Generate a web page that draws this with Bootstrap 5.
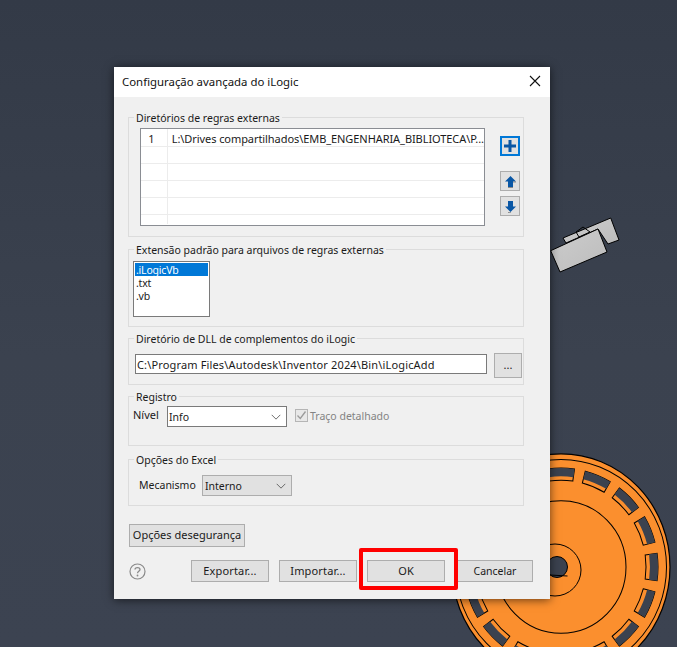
<!DOCTYPE html>
<html lang="pt">
<head>
<meta charset="utf-8">
<title>Configuração avançada do iLogic</title>
<link href="https://cdn.jsdelivr.net/npm/bootstrap@5.3.0/dist/css/bootstrap.min.css" rel="stylesheet">
<style>
html,body{margin:0;height:100%;overflow:hidden;background:#3a414e}
.desk{position:relative;width:677px;height:647px;overflow:hidden;background:linear-gradient(180deg,#333a47 0%,#3b424f 55%,#3c4351 100%)}
.scene{position:absolute;left:0;top:0}
.dlg{position:absolute;left:114px;top:67px;width:436px;height:532px;background:#f0f0f0;box-shadow:0 1px 9px rgba(0,0,0,.6);font-family:"Noto Sans","Liberation Sans",sans-serif;font-size:10.5px;line-height:14px;color:#1a1a1a}
.ttl{height:30px;background:#fff;padding-left:8px;font-size:11.4px;color:#111}
.grp{margin-left:14px;width:396px;border:1px solid #dcdcdc;box-sizing:border-box;min-width:0}
.grp>legend{float:none;width:auto;height:13px;padding:0 2px;font-size:10.5px;line-height:15px;color:#1a1a1a}
.g1{height:126px;margin-top:14px;padding:4px 0 0 11px}
.g1>legend{margin:0 0 0 -6px}
.g2{height:84px;margin-top:6px;padding:5px 0 0 4px}
.g2>legend{margin:0 0 0 1px}
.g3{height:53px;margin-top:5px;padding:8px 0 0 6px}
.g3>legend{margin:0 0 0 -1px}
.g4{height:56px;margin-top:5px;padding:3px 0 0 4px}
.g4>legend{margin:0 0 0 1px}
.g5{height:53px;margin-top:7px;padding:9px 0 0 10px}
.g5>legend{margin:0 0 0 -5px}
.rules{width:345px;height:98px;border:1px solid #8a8d93;background:#fff;overflow:hidden;font-size:11px;letter-spacing:-.07px}
.rules table{width:100%;border-collapse:collapse}
.rules td{height:17px;padding:3px 0 0;line-height:13px;border-bottom:1px solid #ececec;white-space:nowrap}
.rules td:first-child{width:29px;text-align:center;border-right:1px solid #ececec;padding-right:5px}
.rules td:last-child{padding-left:4px}
.rules tr:last-child td{border-bottom:0;height:10px;padding-top:0}
.side{margin-left:15px;padding-top:8px;gap:5px}
.sq{width:20px;height:20px;padding:0;background:#e1e1e1;border:1px solid #adadad;border-radius:0}
.sq.on{border:2px solid #0078d7;margin-bottom:10px}
.sq svg{display:block;margin:auto}
.lbx{width:77px;height:56px;border:1px solid #7a7a7a;background:#fff;padding:1px;border-radius:0;display:block}
.lbx .list-group-item{border:0;padding:1px 0 0 1px;height:13px;line-height:13px;background:transparent;font-size:10.5px;letter-spacing:-.2px;color:#1a1a1a;border-radius:0}
.lbx .list-group-item.active{background:#0078d7;color:#fff}
.path{width:352px;height:20px;margin-top:1px;padding:0 0 0 1px;border:1px solid #7a7a7a;border-radius:0;font-size:11px;letter-spacing:.15px;line-height:18px;color:#1a1a1a;background:#fff}
.more{width:28px;height:25px;margin-left:7px;padding:0 0 2px;background:#e1e1e1;border:1px solid #adadad;border-radius:0;font-size:11px;line-height:20px;color:#1a1a1a}
.lvl{width:34px;margin-top:2px;font-size:11px}
.sel{height:21px;padding:1px 0 0 1px;font-size:10.5px;line-height:18px;color:#1a1a1a;border:1px solid #7a7a7a;border-radius:0;background-size:10px 6px;background-position:right 5px center;background-image:url("data:image/svg+xml,%3csvg xmlns='http://www.w3.org/2000/svg' viewBox='0 0 11 7'%3e%3cpath fill='none' stroke='%23555' d='M.5 1 5.500 6 10.500 1'/%3e%3c/svg%3e")}
.sel.a{width:120px;background-color:#fff}
.sel.b{width:90px;background-color:#e1e1e1;border-color:#adadad;padding-left:2px}
.chk{width:13px;height:13px;margin:3px 2px 0 8px;background:#e8e8e8;border:1px solid #b5b5b5;flex:none}
.chk svg{display:block}
.dim{color:#838383;margin-top:3px}
.mec{width:63px;margin-top:3px}
.wbtn{height:23px;padding:0;background:#e1e1e1;border:1px solid #adadad;border-radius:0;font-size:11px;line-height:20px;color:#1a1a1a;white-space:nowrap}
.sec{width:116px;margin:18px 0 0 15px;display:block;padding-bottom:2px}
.foot{margin:13px 0 0 15px;position:relative}
.foot .wbtn{width:78px;height:22px;letter-spacing:.15px}
.foot .gapx{margin-left:10px}
.foot .cancel{width:76px;margin-left:12px;font-size:10.5px;letter-spacing:0}
.hlp{width:17px;height:17px;margin:3px 45px 0 0;flex:none}
.okw{position:relative}
.redbox{position:absolute;left:-8px;top:-12px;width:99px;height:42px;border:4px solid #f00;border-radius:2px;pointer-events:none}
.xbtn{position:absolute;right:9px;top:8px;line-height:0}
</style>
</head>
<body>
<div class="desk">
<svg class="scene" width="677" height="647" viewBox="0 0 677 647">
 <defs>
  <linearGradient id="gy" x1="0" y1="0" x2="1" y2="1"><stop offset="0" stop-color="#cdcdcd"/><stop offset="1" stop-color="#bcbcbc"/></linearGradient>
  <path id="slot" d="M84.2-11.8 96.06-13.5A97 97 0 0 1 96.06 13.5L84.2 11.8A85 85 0 0 0 84.2-11.8Z" fill="#fb8f2e" stroke="#000" stroke-width="1"/>
  <path id="cut" d="M88.1-12.4 96.06-13.5A97 97 0 0 1 96.06 13.5L88.1 12.4A89 89 0 0 0 88.1-12.4Z" fill="#3b424f" stroke="none"/>
  <g id="sl"><use href="#slot"/><use href="#cut"/></g>
 </defs>
 <g stroke="#000" stroke-width="1" fill="url(#gy)" stroke-linejoin="round">
  <path d="M563 238 610.700 218 619 240 608 244 598 229 566 243Z"/>
  <path d="M576 232 583 227 590 232 579 237Z" fill="none"/>
  <path d="M550.700 250.700 598 229 607 252 560 272Z"/>
 </g>
 <g transform="translate(561 567) scale(1 1.02)">
  <ellipse rx="109" ry="111" fill="#fb8f2e" stroke="#000" stroke-width="1.2"/>
  <circle r="105.500" fill="none" stroke="#000" stroke-width="1"/>
  <g>
   <use href="#sl"/><use href="#sl" transform="rotate(22.5)"/><use href="#sl" transform="rotate(45)"/><use href="#sl" transform="rotate(67.5)"/>
   <use href="#sl" transform="rotate(90)"/><use href="#sl" transform="rotate(112.5)"/><use href="#sl" transform="rotate(135)"/><use href="#sl" transform="rotate(157.5)"/>
   <use href="#sl" transform="rotate(180)"/><use href="#sl" transform="rotate(202.5)"/><use href="#sl" transform="rotate(225)"/><use href="#sl" transform="rotate(247.5)"/>
   <use href="#sl" transform="rotate(270)"/><use href="#sl" transform="rotate(292.5)"/><use href="#sl" transform="rotate(315)"/><use href="#sl" transform="rotate(337.5)"/>
  </g>
  <ellipse rx="65" ry="65" fill="none" stroke="#000" stroke-width="1"/>
 </g>
 <circle cx="555" cy="570" r="26" fill="none" stroke="#000" stroke-width="1"/>
 <circle cx="557" cy="567" r="10.500" fill="#3b424f" stroke="#000" stroke-width="1"/>
 <path d="M550 575 567.500 576" stroke="#000" fill="none"/>
</svg>

<div class="dlg">
 <div class="ttl d-flex align-items-center">Configuração avançada do iLogic</div>
 <div class="xbtn"><svg width="12" height="12" viewBox="0 0 12 12"><path d="M1 1 11 11M11 1 1 11" stroke="#111" stroke-width="1.1" fill="none"/></svg></div>

 <fieldset class="grp g1">
  <legend>Diretórios de regras externas</legend>
  <div class="d-flex">
   <div class="rules">
    <table>
     <tr><td>1</td><td>L:\Drives compartilhados\EMB_ENGENHARIA_BIBLIOTECA\P...</td></tr>
     <tr><td></td><td></td></tr>
     <tr><td></td><td></td></tr>
     <tr><td></td><td></td></tr>
     <tr><td></td><td></td></tr>
     <tr><td></td><td></td></tr>
    </table>
   </div>
   <div class="side d-flex flex-column">
    <button class="btn sq on" type="button" aria-label="Adicionar"><svg width="12" height="12" viewBox="0 0 12 12"><path d="M4.500 0h3v4.500H12v3H7.500V12h-3V7.500H0v-3h4.500z" fill="#0a57a5"/></svg></button>
    <button class="btn sq" type="button" aria-label="Para cima"><svg width="13" height="13" viewBox="0 0 13 13"><path d="M6.500 1 12 6.500H9V12H4V6.500H1z" fill="#0a57a5"/><path d="M9 7h3M9 12.500H4" stroke="#8b8b8b" fill="none"/></svg></button>
    <button class="btn sq" type="button" aria-label="Para baixo"><svg width="13" height="13" viewBox="0 0 13 13"><path d="M4 1h5v5.500h3L6.500 12 1 6.500h3z" fill="#0a57a5"/><path d="M4 12.500 7 12.800" stroke="#8b8b8b" fill="none"/></svg></button>
   </div>
  </div>
 </fieldset>

 <fieldset class="grp g2">
  <legend>Extensão padrão para arquivos de regras externas</legend>
  <div class="lbx list-group">
   <div class="list-group-item active">.iLogicVb</div>
   <div class="list-group-item">.txt</div>
   <div class="list-group-item">.vb</div>
  </div>
 </fieldset>

 <fieldset class="grp g3">
  <legend>Diretório de DLL de complementos do iLogic</legend>
  <div class="d-flex align-items-start">
   <input class="form-control path" type="text" value="C:\Program Files\Autodesk\Inventor 2024\Bin\iLogicAdd">
   <button class="btn more" type="button">...</button>
  </div>
 </fieldset>

 <fieldset class="grp g4">
  <legend>Registro</legend>
  <div class="d-flex align-items-start">
   <div class="lvl">Nível</div>
   <select class="form-select sel a"><option>Info</option></select>
   <div class="chk"><svg width="11" height="11" viewBox="0 0 11 11"><path d="M1.500 5.500 4.300 8.500 9.500 1.500" stroke="#9a9a9a" stroke-width="1.300" fill="none"/></svg></div>
   <div class="dim">Traço detalhado</div>
  </div>
 </fieldset>

 <fieldset class="grp g5">
  <legend>Opções do Excel</legend>
  <div class="d-flex align-items-start">
   <div class="mec">Mecanismo</div>
   <select class="form-select sel b"><option>Interno</option></select>
  </div>
 </fieldset>

 <button class="btn wbtn sec" type="button">Opções desegurança</button>

 <div class="foot d-flex">
  <svg class="hlp" viewBox="0 0 17 17"><circle cx="8.500" cy="8.500" r="7.500" fill="none" stroke="#8a8a8a" stroke-width="1.200"/><path d="M6 6.500C6 3.900 11 3.900 11 6.500 11 8.300 8.500 8.300 8.500 10.300" fill="none" stroke="#8a8a8a" stroke-width="1.300"/><circle cx="8.500" cy="12.500" r=".9" fill="#8a8a8a"/></svg>
  <button class="btn wbtn" type="button">Exportar...</button>
  <button class="btn wbtn gapx" type="button">Importar...</button>
  <div class="okw gapx"><button class="btn wbtn" type="button">OK</button><div class="redbox"></div></div>
  <button class="btn wbtn cancel" type="button">Cancelar</button>
 </div>
</div>
</div>
</body>
</html>
